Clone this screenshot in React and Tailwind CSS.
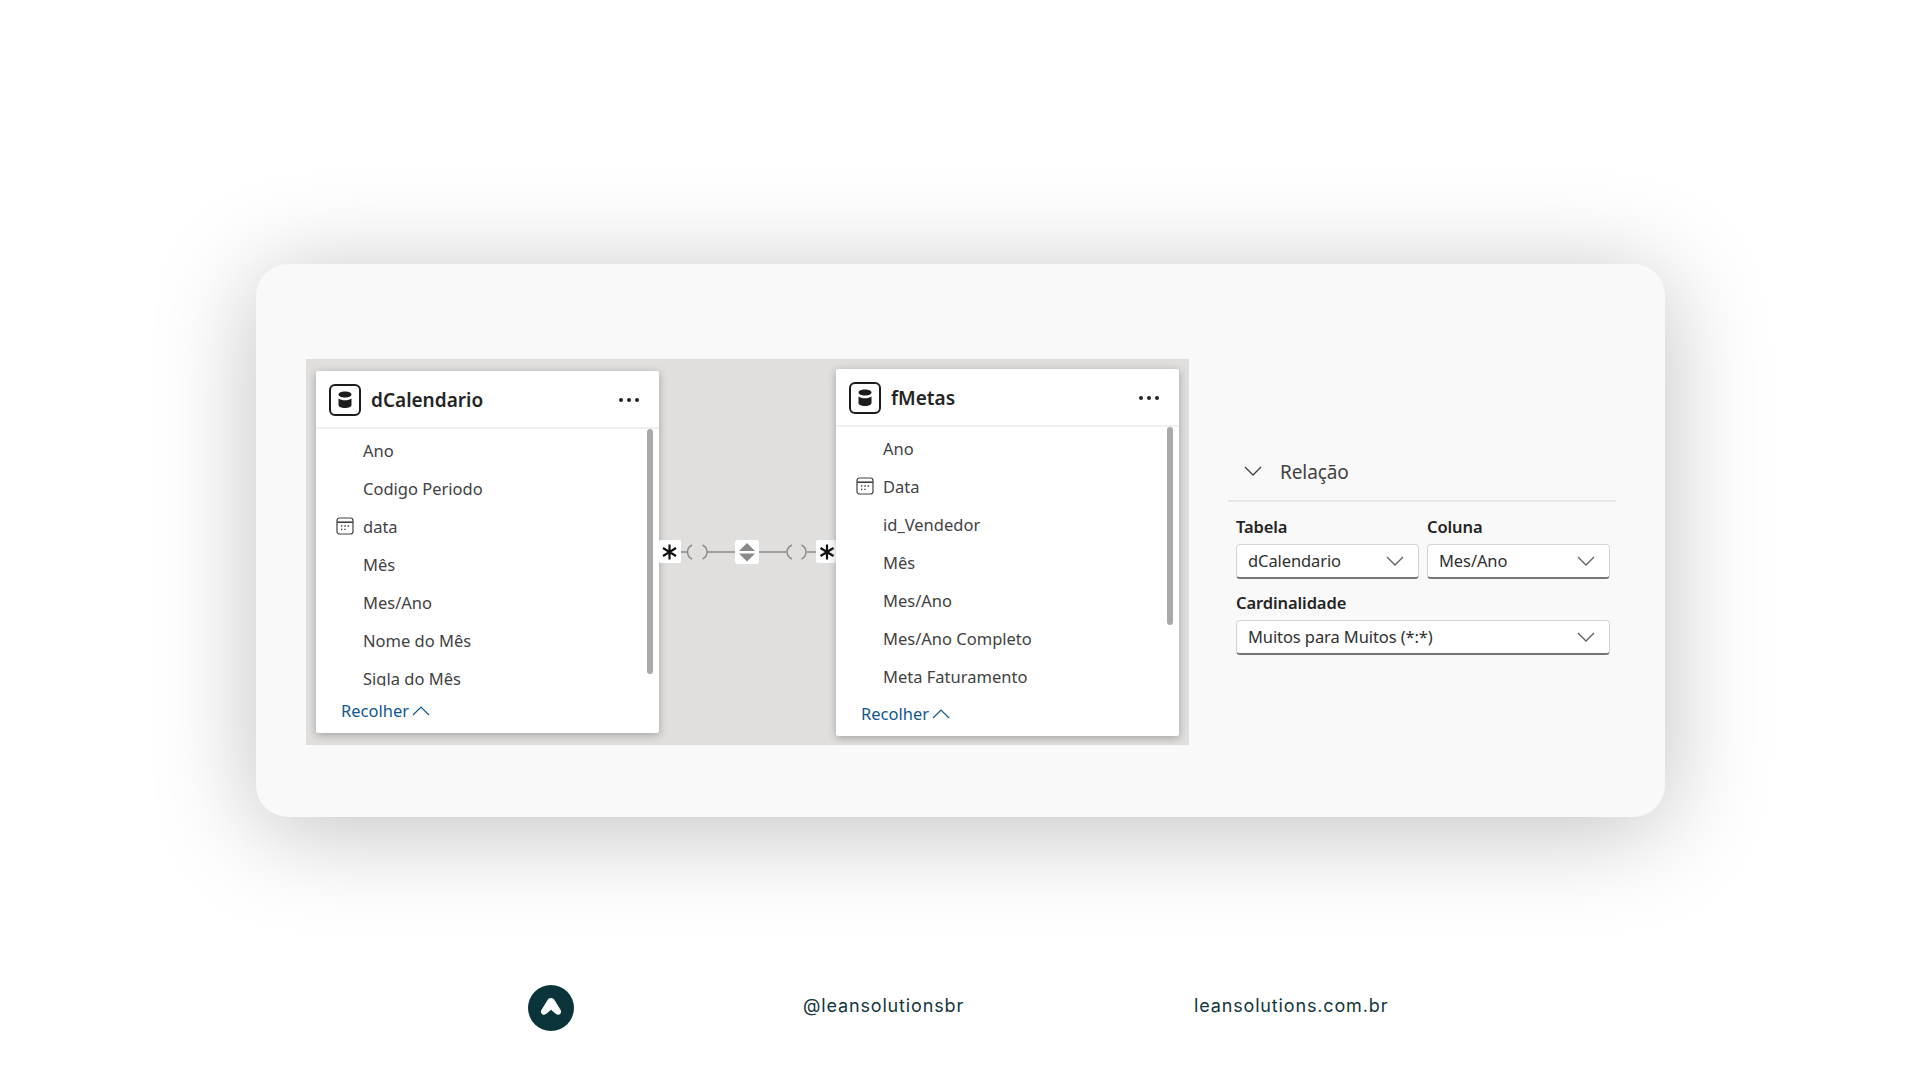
const chevronDown = "M1 5l8 8 8-8"

function Chevron({ className }) {
    return (
        <svg className={className} width="18" height="18" viewBox="0 0 18 18" fill="none" stroke="currentColor" strokeWidth="1.3">
            <path d={chevronDown} />
        </svg>
    )
}

function CalendarIcon() {
    return (
        <svg className="absolute left-[20px] top-[9px] text-[#424242]" width="18" height="18" viewBox="0 0 18 18" fill="none" stroke="currentColor" strokeWidth="1.2">
            <rect x="1" y="1" width="16" height="16" rx="2.5" />
            <path d="M1 5.2h16" strokeWidth="1.6" />
            <path d="M5 9h1.4M8.3 9h1.4M11.6 9h1.4M5 12.4h1.4M8.3 12.4h1.4" strokeWidth="1.3" />
        </svg>
    )
}

function TableIcon() {
    return (
        <svg width="32" height="32" viewBox="0 0 32 32" fill="none">
            <rect x="1" y="1" width="30" height="30" rx="5" stroke="#1c1c1c" strokeWidth="2" />
            <path d="M9.500 10.5c0-1.700 2.900-3 6.500-3s6.500 1.300 6.500 3-2.900 3-6.500 3-6.500-1.300-6.500-3z" fill="#1c1c1c" />
            <path d="M9.500 14.500c1.500 1.200 3.900 1.800 6.500 1.800s5-.6 6.500-1.800v6.500c0 1.700-2.900 3-6.500 3s-6.500-1.300-6.500-3z" fill="#1c1c1c" />
        </svg>
    )
}

function Dots() {
    return (
        <div className="flex gap-[4px]">
            <div className="w-[4px] h-[4px] rounded-full bg-[#242424]"></div>
            <div className="w-[4px] h-[4px] rounded-full bg-[#242424]"></div>
            <div className="w-[4px] h-[4px] rounded-full bg-[#242424]"></div>
        </div>
    )
}

function TableCard({ name, rows, listHeight, thumbHeight, className, footerClass }) {
    return (
        <div className={`w-[343px] bg-white rounded-[2px] shadow-[0_2px_8px_rgba(0,0,0,0.28)] flex flex-col font-['Noto_Sans',sans-serif] ${className}`}>
            <div className="h-[58px] flex items-center pt-[2px] pl-[13px] pr-[20px] border-b-2 border-[#f0f0f0]">
                <TableIcon />
                <span className="ml-[10px] text-[19px] font-semibold text-[#242424]">{name}</span>
                <div className="ml-auto"><Dots /></div>
            </div>
            <div className="relative overflow-hidden pt-[3px]" style={{ height: listHeight }}>
                {rows.map((row) => (
                    <div key={row.label} className="relative h-[38px] pl-[47px] flex items-center text-[16.5px] text-[#424242]">
                        {row.date && <CalendarIcon />}
                        {row.label}
                    </div>
                ))}
                <div className="absolute right-[6px] top-0 w-[6px] rounded-full bg-[#a9a9a9]" style={{ height: thumbHeight }}></div>
            </div>
            <div className={`flex-1 pl-[25px] flex items-center gap-[3px] text-[16.5px] text-[#10588f] ${footerClass}`}>
                Recolher
                <svg width="18" height="12" viewBox="0 0 18 12" fill="none" stroke="#10588f" strokeWidth="1.200">
                    <path d="M1 10l8-8 8 8" />
                </svg>
            </div>
        </div>
    )
}

function Connector() {
    return (
        <div className="flex-1 mt-[181px] h-[24px]">
            <svg width="177" height="24" viewBox="0 0 177 24" fill="none">
                <path d="M22 12h7M48 12h28M100 12h27M148 12h9" stroke="#8c8c8c" strokeWidth="1.5" />
                <path d="M33 5c-3 1.500-4.500 4-4.500 7s1.500 5.500 4.500 7M48 12c0-3-1.500-5.500-4.500-7M48 12c0 3-1.500 5.500-4.500 7M133 5c-3 1.500-5 4-5 7s2 5.500 5 7M147 12c0-3-1.500-5.500-4.500-7M147 12c0 3-1.500 5.500-4.500 7" stroke="#8c8c8c" strokeWidth="1.5" />
                <rect x="0" y="0" width="22" height="23" rx="2" fill="#fff" />
                <rect x="157" y="0" width="20" height="23" rx="2" fill="#fff" />
                <rect x="76" y="0" width="24" height="24" rx="3" fill="#fff" />
                <path d="M80 11l8-8 8 8zM80 13.500l8 8 8-8z" fill="#8a8a8a" />
                <path d="M10.500 4.500v15M4 8l13 8M17 8l-13 8" stroke="#111" strokeWidth="2.200" />
                <path d="M168 4.500v15M161.500 8l13 8M174.500 8l-13 8" stroke="#111" strokeWidth="2.200" />
            </svg>
        </div>
    )
}

function Select({ value, className }) {
    return (
        <div className={`h-[35px] bg-white rounded-[4px] border border-[#d4d4d4] border-b-2 border-b-[#757575] pl-[11px] pr-[14px] flex items-center justify-between text-[16.5px] text-[#303030] tracking-[-0.1px] ${className}`}>
            {value}
            <Chevron className="text-[#616161]" />
        </div>
    )
}

const labelClass = "h-[22px] mb-[6px] text-[16.5px] leading-[22px] font-semibold text-[#242424] tracking-[-0.1px]"

function RelationPanel() {
    return (
        <div className="w-[388px] ml-[39px] mt-[97px] font-['Noto_Sans',sans-serif]">
            <div className="h-[46px] border-b-2 border-[#e8e8e8] flex items-start pl-[16px]">
                <Chevron className="mt-[6px] text-[#424242]" />
                <span className="ml-[18px] text-[19px] leading-[32px] text-[#424242] tracking-[-0.1px]">Relação</span>
            </div>
            <div className="pl-[8px] pr-[6px] pt-[14px]">
                <div className="grid grid-cols-2 gap-x-[8px]">
                    <div>
                        <div className={labelClass}>Tabela</div>
                        <Select value="dCalendario" />
                    </div>
                    <div>
                        <div className={labelClass}>Coluna</div>
                        <Select value="Mes/Ano" />
                    </div>
                </div>
                <div className={`mt-[13px] ${labelClass}`}>Cardinalidade</div>
                <Select value="Muitos para Muitos (*:*)" />
            </div>
        </div>
    )
}

const leftRows = [
    { label: 'Ano' },
    { label: 'Codigo Periodo' },
    { label: 'data', date: true },
    { label: 'Mês' },
    { label: 'Mes/Ano' },
    { label: 'Nome do Mês' },
    { label: 'Sigla do Mês' },
]

const rightRows = [
    { label: 'Ano' },
    { label: 'Data', date: true },
    { label: 'id_Vendedor' },
    { label: 'Mês' },
    { label: 'Mes/Ano' },
    { label: 'Mes/Ano Completo' },
    { label: 'Meta Faturamento' },
]

export default function App() {
    return (
        <div className="w-[1920px] h-[1080px] bg-white overflow-hidden pt-[264px]">
            <div className="ml-[256px] w-[1409px] h-[553px] rounded-[32px] bg-[#f9f9f9] shadow-[0_12px_100px_rgba(0,0,0,0.25)] pl-[50px] pt-[95px] flex items-start">
                <div className="w-[883px] h-[386px] bg-[#e0dfdd] flex items-start pl-[10px]">
                    <TableCard name="dCalendario" rows={leftRows} listHeight={257} thumbHeight={245} className="mt-[12px] h-[362px]" footerClass="pt-[3px]" />
                    <Connector />
                    <TableCard name="fMetas" rows={rightRows} listHeight={267} thumbHeight={198} className="mt-[10px] h-[367px]" footerClass="pb-[2px]" />
                    <div className="w-[10px]"></div>
                </div>
                <RelationPanel />
            </div>
            <div className="mt-[168px] ml-[528px] flex items-center text-[18px] text-[#12363b] font-['Inter',sans-serif] whitespace-nowrap">
                <svg width="46" height="46" viewBox="0 0 46 46">
                    <circle cx="23" cy="23" r="23" fill="#0a343a" />
                    <path d="M23 13c1.600 0 2.800.9 3.600 2.200l6 9.800c.9 1.600.6 3.200-.8 4.200-1.500 1-3.300.6-4.500-.6L23 24.800l-4.300 3.800c-1.200 1.200-3 1.600-4.500.6-1.400-1-1.700-2.600-.8-4.200l6-9.800c.8-1.300 2-2.200 3.600-2.200z" fill="#fff" />
                </svg>
                <span className="ml-[229px] w-[165px] pb-[5px] tracking-[0.85px]">@leansolutionsbr</span>
                <span className="ml-[226px] pb-[5px] tracking-[0.85px]">leansolutions.com.br</span>
            </div>
        </div>
    )
}
